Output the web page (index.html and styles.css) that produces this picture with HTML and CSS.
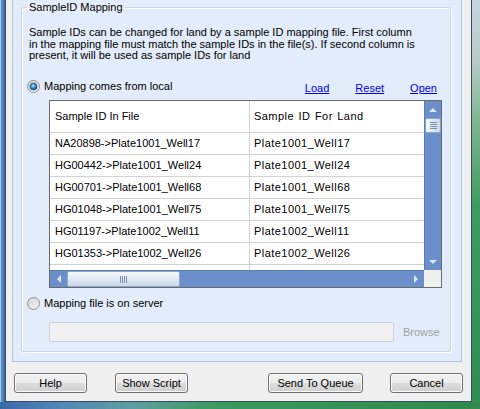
FILE: index.html
```html
<!DOCTYPE html>
<html>
<head>
<meta charset="utf-8">
<title>SampleID Mapping</title>
<link rel="stylesheet" href="styles.css">
</head>
<body>
<div class="frame">
  <div class="client">
    <div class="panel">
      <fieldset class="group">
        <legend>SampleID Mapping</legend>
        <p class="desc">Sample IDs can be changed for land by a sample ID mapping file. First column<br>in the mapping file must match the sample IDs in the file(s). If second column is<br>present, it will be used as sample IDs for land</p>

        <div class="radio-row">
          <svg class="radio" width="13" height="13" viewBox="0 0 13 13">
            <defs>
              <linearGradient id="rfill1" x1="0" y1="0" x2="1" y2="1">
                <stop offset="0" stop-color="#d4d4d4"/>
                <stop offset="1" stop-color="#fafafa"/>
              </linearGradient>
              <radialGradient id="rdot" cx="45%" cy="40%" r="60%">
                <stop offset="0" stop-color="#b6ecff"/>
                <stop offset="0.45" stop-color="#3c95d8"/>
                <stop offset="1" stop-color="#123f72"/>
              </radialGradient>
            </defs>
            <circle cx="6.5" cy="6.5" r="6" fill="url(#rfill1)" stroke="#8b8b8b"/>
            <circle cx="6.5" cy="6.5" r="3.6" fill="url(#rdot)" stroke="#1c4a7a" stroke-width="0.6"/>
          </svg>
          <span class="label">Mapping comes from local</span>
          <div class="links">
            <a class="link">Load</a>
            <a class="link">Reset</a>
            <a class="link">Open</a>
          </div>
        </div>

        <div class="grid">
          <div class="view">
            <div class="row head">
              <div class="cell">Sample ID In File</div>
              <div class="cell c2">Sample ID For Land</div>
            </div>
            <div class="row"><div class="cell">NA20898-&gt;Plate1001_Well17</div><div class="cell c2">Plate1001_Well17</div></div>
            <div class="row"><div class="cell">HG00442-&gt;Plate1001_Well24</div><div class="cell c2">Plate1001_Well24</div></div>
            <div class="row"><div class="cell">HG00701-&gt;Plate1001_Well68</div><div class="cell c2">Plate1001_Well68</div></div>
            <div class="row"><div class="cell">HG01048-&gt;Plate1001_Well75</div><div class="cell c2">Plate1001_Well75</div></div>
            <div class="row"><div class="cell">HG01197-&gt;Plate1002_Well11</div><div class="cell c2">Plate1002_Well11</div></div>
            <div class="row"><div class="cell">HG01353-&gt;Plate1002_Well26</div><div class="cell c2">Plate1002_Well26</div></div>
            <div class="row"><div class="cell"></div><div class="cell c2"></div></div>
          </div>
          <div class="vscroll">
            <div class="sbtn"><span class="tri tri-up"></span></div>
            <div class="vthumb"><i></i><i></i><i></i><i></i></div>
            <div class="sfill"></div>
            <div class="sbtn"><span class="tri tri-down"></span></div>
          </div>
          <div class="hscroll">
            <div class="sbtn"><span class="tri tri-left"></span></div>
            <div class="hthumb"><i></i><i></i><i></i><i></i></div>
            <div class="sfill"></div>
            <div class="sbtn"><span class="tri tri-right"></span></div>
          </div>
          <div class="corner"></div>
        </div>

        <div class="radio-row second">
          <svg class="radio" width="13" height="13" viewBox="0 0 13 13">
            <defs>
              <linearGradient id="rfill2" x1="0" y1="0" x2="1" y2="1">
                <stop offset="0" stop-color="#cfcfcf"/>
                <stop offset="1" stop-color="#f7f7f7"/>
              </linearGradient>
            </defs>
            <circle cx="6.5" cy="6.5" r="6" fill="url(#rfill2)" stroke="#8e8e8e"/>
            <circle cx="6.5" cy="6.5" r="4" fill="none" stroke="#e6e6e6" stroke-width="0.8"/>
          </svg>
          <span class="label">Mapping file is on server</span>
        </div>

        <div class="server-row">
          <div class="textbox"></div>
          <span class="browse">Browse</span>
        </div>
      </fieldset>
    </div>

    <div class="buttons">
      <button class="btn">Help</button>
      <button class="btn gap">Show Script</button>
      <button class="btn push wide">Send To Queue</button>
      <button class="btn gap2">Cancel</button>
    </div>
  </div>
</div>
</body>
</html>
```

FILE: styles.css
```css
* { box-sizing: border-box; }

html, body {
  margin: 0;
  padding: 0;
}

body {
  width: 480px;
  height: 409px;
  overflow: hidden;
  font-family: "Liberation Sans", Arial, sans-serif;
  font-size: 11px;
  color: #000;
  background: #fff;
}

/* window frame (Aero glass edges) */
.frame {
  width: 480px;
  height: 409px;
  display: flex;
  padding: 0 8px 7px 5px;
  background:
    linear-gradient(to right, #3a6aa8 0%, #4f86b8 12%, #5d9fa0 28%, #3a9a5e 45%, #2d8a4c 100%) left bottom / 100% 7px no-repeat,
    linear-gradient(to right, #a9c6e8 0px, #a9c6e8 1px, #6a98d0 1px, #4a7ec0 3px, #3466a8 5px) left top / 5px 100% no-repeat,
    linear-gradient(to bottom, #c6d3de 0%, #b8cbc8 15%, #7fb590 30%, #3f9c60 50%, #2f8d50 100%) right top / 8px 100% no-repeat,
    #3f8f5e;
}

.client {
  flex: 1;
  display: flex;
  flex-direction: column;
  background: #f0f0f0;
  border: 1px solid #3a4c62;
  border-top: none;
  padding: 0 0 8px 0;
}

.panel {
  flex: 1;
  display: flex;
  flex-direction: column;
  margin: 0 9px 0 6px;
  padding: 0 10px 9px 8px;
  background: #e2ecfa;
  border: 1px solid #aec3de;
  border-top: none;
}

/* group box */
.group {
  flex: 1;
  margin: 0;
  min-width: 0;
  padding: 0 8px 9px 5px;
  border: 1px solid #ccd7e2;
  border-radius: 3px;
  box-shadow: 1px 1px 0 #ffffff, inset 1px 1px 0 #ffffff;
}

.group legend {
  padding: 0 2px;
  line-height: 14px;
}

.desc {
  margin: 13px 0 0 2px;
  height: 35px;
  line-height: 11.5px;
  white-space: nowrap;
}

.radio-row {
  display: flex;
  align-items: center;
  height: 16px;
  margin-top: 16px;
}

.radio-row.second {
  margin-top: 7px;
}

.radio {
  flex: none;
  display: block;
}

.label {
  margin-left: 4px;
  line-height: 16px;
}

.links {
  margin-left: auto;
  margin-right: 5px;
  display: flex;
  gap: 26px;
  padding-top: 3px;
}

.link {
  color: #0000ee;
  text-decoration: underline;
  cursor: pointer;
}

/* data grid */
.grid {
  margin: 6px 0 0 22px;
  height: 188px;
  border: 1px solid #6a6a6a;
  background: #fff;
  display: grid;
  grid-template-columns: 1fr 17px;
  grid-template-rows: 1fr 17px;
}

.view {
  overflow: hidden;
  min-width: 0;
  min-height: 0;
}

.row {
  display: grid;
  grid-template-columns: 200px 1fr;
  height: 22px;
}

.row.head {
  height: 32px;
}

.cell {
  border-bottom: 1px solid #d3d3d3;
  line-height: 21px;
  padding-left: 5px;
  white-space: nowrap;
  overflow: hidden;
}

.head .cell {
  line-height: 31px;
}

.cell:first-child {
  border-right: 1px solid #d3d3d3;
}

.cell.c2 {
  padding-left: 4px;
  letter-spacing: 0.45px;
}

.head .cell.c2 {
  word-spacing: 1px;
}

/* scrollbars */
.vscroll, .hscroll {
  background: #6b8fca;
  display: flex;
}

.vscroll {
  flex-direction: column;
  border-left: 1px solid #5b7db6;
}

.hscroll {
  border-top: 1px solid #5b7db6;
}

.sbtn {
  flex: none;
  width: 16px;
  height: 16px;
  display: flex;
  align-items: center;
  justify-content: center;
}

.vscroll .sbtn { width: 100%; height: 17px; }
.hscroll .sbtn { height: 100%; width: 17px; }

.sfill { flex: 1; }

.tri {
  width: 0;
  height: 0;
  border: 4px solid transparent;
}

.tri-up { border-bottom-color: #dde6f3; border-top-width: 0; }
.tri-down { border-top-color: #dde6f3; border-bottom-width: 0; }
.tri-left { border-right-color: #dde6f3; border-left-width: 0; }
.tri-right { border-left-color: #dde6f3; border-right-width: 0; }

.vthumb {
  flex: none;
  height: 15px;
  background: linear-gradient(to right, #f6f8fc, #ccd9ea);
  border: 1px solid #8da6cc;
  border-radius: 2px;
  display: flex;
  flex-direction: column;
  align-items: center;
  justify-content: center;
  gap: 1px;
}

.vthumb i {
  display: block;
  width: 7px;
  height: 1px;
  background: #7d8fae;
}

.hthumb {
  flex: none;
  width: 113px;
  background: linear-gradient(to bottom, #f6f8fc, #ccd9ea);
  border: 1px solid #8da6cc;
  border-radius: 2px;
  display: flex;
  align-items: center;
  justify-content: center;
  gap: 1px;
}

.hthumb i {
  display: block;
  width: 1px;
  height: 7px;
  background: #7d8fae;
}

.corner {
  background: #f0f0f0;
}

/* server row */
.server-row {
  display: flex;
  align-items: center;
  margin-top: 11px;
  margin-left: 22px;
}

.textbox {
  width: 345px;
  height: 20px;
  background: #f1f1f1;
  border: 1px solid #cdd2d8;
  border-radius: 2px;
}

.browse {
  margin-left: 9px;
  color: #a3a3a3;
}

/* dialog buttons */
.buttons {
  display: flex;
  margin-top: 11px;
  padding: 0 8px;
}

.btn {
  width: 73px;
  height: 20px;
  padding: 0;
  font-family: "Liberation Sans", Arial, sans-serif;
  font-size: 11px;
  color: #000;
  border: 1px solid #707070;
  border-radius: 3px;
  background: linear-gradient(to bottom, #f2f2f2 0%, #ebebeb 50%, #dddddd 50%, #cfcfcf 100%);
  box-shadow: inset 0 0 0 1px #fbfbfb;
}

.btn.gap { margin-left: 28px; }
.btn.push { margin-left: auto; }
.btn.wide { width: 95px; }
.btn.gap2 { margin-left: 27px; }
```
